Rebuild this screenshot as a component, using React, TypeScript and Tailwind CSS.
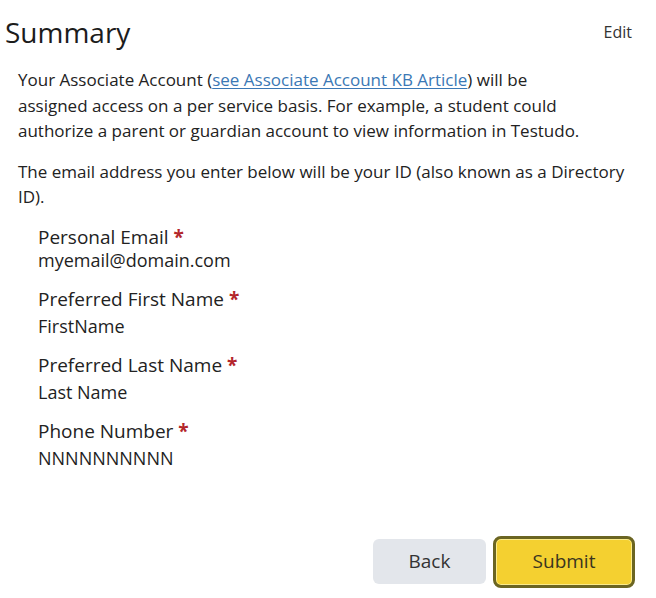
const fields = [
  { label: 'Personal Email', value: 'myemail@domain.com', first: true },
  { label: 'Preferred First Name', value: 'FirstName', first: false },
  { label: 'Preferred Last Name', value: 'Last Name', first: false },
  { label: 'Phone Number', value: 'NNNNNNNNNN', first: false },
]

export default function App() {
  return (
    <div className="h-[598px] w-[656px] bg-white font-['Open_Sans',sans-serif] text-[#222]">
      <header className="flex items-start justify-between pl-[5px] pr-[24px] pt-[12px]">
        <h1 className="text-[28px] leading-[40px] text-[#1c1c1c]">Summary</h1>
        <button className="mt-[8px] text-[16px] text-[#333]">Edit</button>
      </header>

      <div className="ml-[18px] w-[620px] pt-[15px] text-[17px] leading-[25.5px]">
        <p>
          Your Associate Account (
          <a href="#" className="text-[#3b78b5] underline underline-offset-2">
            see Associate Account KB Article
          </a>
          ) will be
          <br />
          assigned access on a per service basis. For example, a student could
          <br />
          authorize a parent or guardian account to view information in Testudo.
        </p>
        <p className="mt-[15px]">
          The email address you enter below will be your ID (also known as a Directory ID).
        </p>
      </div>

      <dl className="flex flex-col gap-[13px] pl-[38px] pt-[14px]">
        {fields.map((f) => (
          <div key={f.label}>
            <dt className="text-[19px] leading-[26px] text-[#222]">
              {f.label} <span className="font-bold text-[#b3262b]">*</span>
            </dt>
            <dd
              className={
                f.first
                  ? 'mt-[-3px] text-[18px] leading-[26px] text-[#1e1e1e]'
                  : 'mt-[1px] text-[18px] leading-[26px] text-[#1e1e1e]'
              }
            >
              {f.value}
            </dd>
          </div>
        ))}
      </dl>

      <div className="mt-[65px] flex items-center justify-end gap-[7px] pr-[21px]">
        <button className="h-[45px] w-[113px] rounded-[6px] bg-[#e3e6eb] text-[19px] text-[#333]">
          Back
        </button>
        <button className="h-[52px] w-[142px] rounded-[8px] border-[3px] border-[#6b6522] bg-[#f4d030] text-[19px] text-[#3a3520] shadow-[inset_0_0_0_1px_#fbeb8a]">
          Submit
        </button>
      </div>
    </div>
  )
}
